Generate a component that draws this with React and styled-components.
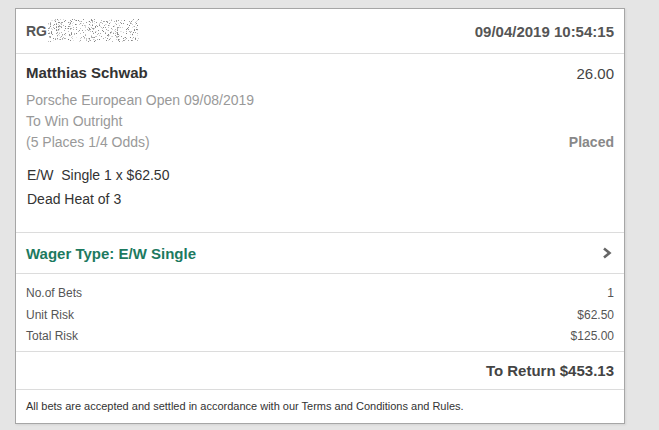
import styled, { createGlobalStyle } from "styled-components";

const GlobalStyle = createGlobalStyle`
  html, body {
    margin: 0;
    padding: 0;
    background: #e5e5e5;
    font-family: "Liberation Sans", Arial, sans-serif;
  }
`;

// pseudo random speckle for the masked account number
const speckle = (() => {
  const dots = [];
  let seed = 7;
  const rnd = () => {
    seed = (seed * 9301 + 49297) % 233280;
    return seed / 233280;
  };
  for (let i = 0; i < 480; i++) {
    const x = rnd() * 90;
    const y = rnd() * 22;
    const shade = Math.floor(80 + rnd() * 150);
    dots.push({ x: Math.round(x), y: Math.round(y), c: `rgb(${shade},${shade},${shade})` });
  }
  return dots;
})();

export default function App() {
  return (
    <>
      <GlobalStyle />
      <Page>
        <Card>
          <Header>
            <Ref>
              RG
              <svg width="92" height="24" viewBox="0 0 92 24">
                {speckle.map((d, i) => (
                  <rect key={i} x={d.x} y={d.y} width="1" height="1" fill={d.c} />
                ))}
              </svg>
            </Ref>
            <Stamp>09/04/2019 10:54:15</Stamp>
          </Header>

          <Selection>
            <Line>
              <Name>Matthias Schwab</Name>
              <Odds>26.00</Odds>
            </Line>
            <Market>
              <div>Porsche European Open 09/08/2019</div>
              <div>To Win Outright</div>
              <Line>
                <span>(5 Places 1/4 Odds)</span>
                <Status>Placed</Status>
              </Line>
            </Market>
            <Stake>
              <div>E/W&nbsp; Single 1 x $62.50</div>
              <div>Dead Heat of 3</div>
            </Stake>
          </Selection>

          <WagerRow>
            <span>Wager Type: E/W Single</span>
            <svg width="10" height="12" viewBox="0 0 10 12">
              <path d="M2 1.5 L7.5 6 L2 10.5" fill="none" stroke="#666" strokeWidth="2.6" />
            </svg>
          </WagerRow>

          <Totals>
            <Line>
              <span>No.of Bets</span>
              <span>1</span>
            </Line>
            <Line>
              <span>Unit Risk</span>
              <span>$62.50</span>
            </Line>
            <Line>
              <span>Total Risk</span>
              <span>$125.00</span>
            </Line>
          </Totals>

          <ReturnRow>To Return $453.13</ReturnRow>

          <Footer>
            All bets are accepted and settled in accordance with our Terms and Conditions and Rules.
          </Footer>
        </Card>
      </Page>
    </>
  );
}

const Page = styled.div`
  padding: 8px 0 6px 15px;
`;

const Card = styled.div`
  width: 608px;
  background: #fff;
  border: 1px solid #a6a6a6;
  box-shadow: 1px 1px 2px rgba(0, 0, 0, 0.08);
`;

const Line = styled.div`
  display: flex;
  justify-content: space-between;
  align-items: center;
`;

const Header = styled.div`
  display: flex;
  justify-content: space-between;
  align-items: center;
  height: 44px;
  padding: 0 10px;
  border-bottom: 1px solid #dcdcdc;
  font-size: 15px;
  font-weight: bold;
  color: #555;
`;

const Ref = styled.div`
  display: flex;
  align-items: center;
  gap: 1px;
  font-size: 14px;
  svg {
    opacity: 0.75;
  }
`;

const Stamp = styled.div`
  font-size: 15px;
`;

const Selection = styled.div`
  padding: 9px 10px 21px;
  border-bottom: 1px solid #dcdcdc;
  font-size: 14px;
`;

const Name = styled.div`
  font-size: 15px;
  font-weight: bold;
  color: #333;
  line-height: 20px;
`;

const Odds = styled.div`
  font-size: 15px;
  color: #444;
`;

const Market = styled.div`
  margin-top: 7px;
  color: #999;
  line-height: 21px;
`;

const Status = styled.span`
  font-weight: bold;
  color: #888;
`;

const Stake = styled.div`
  margin-top: 10px;
  color: #333;
  line-height: 24px;
  padding-left: 1px;
`;

const WagerRow = styled.div`
  display: flex;
  justify-content: space-between;
  align-items: center;
  height: 40px;
  padding: 0 12px 0 10px;
  border-bottom: 1px solid #dcdcdc;
  font-size: 15px;
  font-weight: bold;
  color: #1d7a5f;
`;

const Totals = styled.div`
  padding: 9px 10px 3px;
  border-bottom: 1px solid #dcdcdc;
  font-size: 12px;
  line-height: 21.5px;
  color: #555;
`;

const ReturnRow = styled.div`
  display: flex;
  justify-content: flex-end;
  align-items: center;
  height: 37px;
  padding: 0 10px;
  border-bottom: 1px solid #dcdcdc;
  font-size: 15px;
  font-weight: bold;
  color: #444;
`;

const Footer = styled.div`
  display: flex;
  align-items: center;
  height: 33px;
  padding: 0 10px;
  font-size: 11px;
  color: #333;
`;
